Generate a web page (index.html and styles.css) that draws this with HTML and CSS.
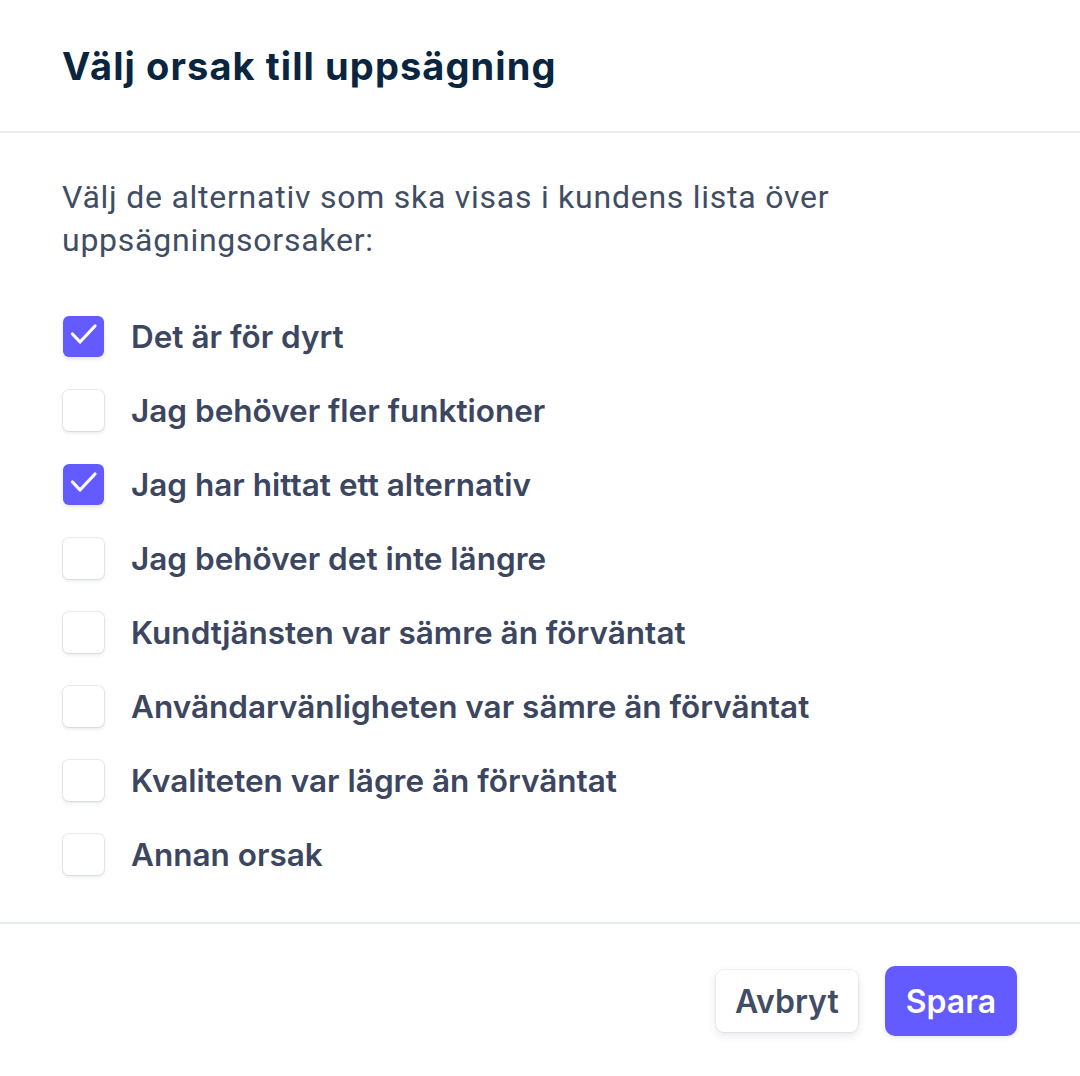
FILE: index.html
```html
<!DOCTYPE html>
<html lang="sv">
<head>
    <meta charset="utf-8" />
    <title>Välj orsak till uppsägning</title>
    <link rel="stylesheet" href="styles.css">
</head>
<body>
    <div class="modal">
        <div class="modal_header">
            <h1>Välj orsak till uppsägning</h1>
        </div>
        <div class="modal_body">
            <p class="intro">Välj de alternativ som ska visas i kundens lista över uppsägningsorsaker:</p>
            <ul class="reasons">
                <li><span class="box checked"><svg viewBox="0 0 41 41"><path d="M9.5 18l7.5 8 15-16" /></svg></span>Det är för dyrt</li>
                <li><span class="box"></span>Jag behöver fler funktioner</li>
                <li><span class="box checked"><svg viewBox="0 0 41 41"><path d="M9.5 18l7.5 8 15-16" /></svg></span>Jag har hittat ett alternativ</li>
                <li><span class="box"></span>Jag behöver det inte längre</li>
                <li><span class="box"></span>Kundtjänsten var sämre än förväntat</li>
                <li><span class="box"></span>Användarvänligheten var sämre än förväntat</li>
                <li><span class="box"></span>Kvaliteten var lägre än förväntat</li>
                <li><span class="box"></span>Annan orsak</li>
            </ul>
        </div>
        <div class="modal_footer">
            <button class="btn btn_cancel">Avbryt</button>
            <button class="btn btn_save">Spara</button>
        </div>
    </div>
</body>
</html>
```

FILE: styles.css
```css
body {
    margin: 0;
    background-color: #ffffff;
    font-family: Inter, "Noto Sans", sans-serif;
}

.modal {
    width: 1080px;
    height: 1076px;
    display: flex;
    flex-direction: column;
}

.modal_header {
    height: 133px;
    box-sizing: border-box;
    border-bottom: 2px solid #e8ecf1;
    padding: 0 62px;
    display: flex;
    align-items: center;
}

h1 {
    margin: 0;
    font-size: 38px;
    font-weight: 700;
    color: #0a2540;
    letter-spacing: 1.1px;
}

.modal_body {
    padding: 43px 62px 31px;
    border-bottom: 2px solid #e8ecf1;
}

.intro {
    margin: 0;
    font-family: Roboto, sans-serif;
    font-size: 32px;
    line-height: 43px;
    letter-spacing: 0.75px;
    color: #414d63;
    width: 830px;
}

.reasons {
    list-style: none;
    margin: 37px 0 0;
    padding: 0;
}

.reasons li {
    height: 74px;
    display: flex;
    align-items: center;
    gap: 27px;
    font-size: 31.5px;
    font-weight: 600;
    color: #3c4661;
}

.box {
    width: 41px;
    height: 41px;
    margin-left: 1px;
    border-radius: 6px;
    background-color: #ffffff;
    box-shadow: 0 0 0 1px rgba(60, 66, 87, 0.1), 0 2px 4px rgba(60, 66, 87, 0.12);
    display: flex;
}

.box.checked {
    background-color: #635bff;
    box-shadow: 0 2px 4px rgba(60, 66, 87, 0.14);
}

.box svg {
    width: 41px;
    height: 41px;
    fill: none;
    stroke: #ffffff;
    stroke-width: 3.2;
    stroke-linecap: round;
    stroke-linejoin: round;
}

.modal_footer {
    flex: 1;
    display: flex;
    justify-content: flex-end;
    align-items: flex-start;
    gap: 27px;
    padding: 42px 63px 0;
}

.btn {
    font-family: Inter, sans-serif;
    font-size: 32px;
    font-weight: 600;
    border: none;
    border-radius: 8px;
    cursor: pointer;
}

.btn_cancel {
    margin-top: 4px;
    height: 62px;
    padding: 0 19px;
    background-color: #ffffff;
    color: #414d63;
    box-shadow: 0 0 0 1px rgba(60, 66, 87, 0.06), 0 3px 8px rgba(60, 66, 87, 0.14);
}

.btn_save {
    height: 70px;
    padding: 0 21px;
    background-color: #635bff;
    color: #ffffff;
    border-radius: 10px;
    box-shadow: 0 2px 5px rgba(60, 66, 87, 0.12);
}
```
